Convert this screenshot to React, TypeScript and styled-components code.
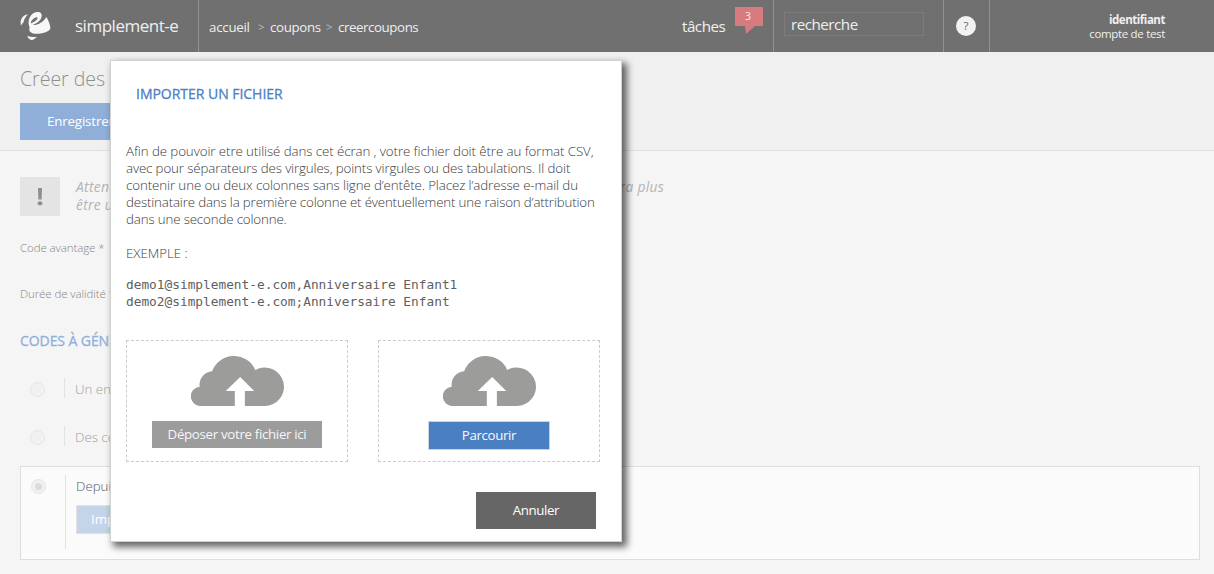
import React from "react";
import styled, { createGlobalStyle } from "styled-components";

const GlobalStyle = createGlobalStyle`
  * { box-sizing: border-box; }
  body {
    margin: 0;
    background: #f5f5f5;
    font-family: "Open Sans", "Liberation Sans", sans-serif;
    font-size: 13.3px;
    overflow: hidden;
  }
  p, h1, h2 { margin: 0; font-weight: 400; }
`;

const Page = styled.div`
  position: relative;
  height: 574px;
  overflow: hidden;
  white-space: nowrap;
`;

/* ---------- top bar ---------- */
const TopBar = styled.header`
  display: flex;
  height: 52px;
  background: #707070;
  color: #efefef;
`;

const Brand = styled.div`
  display: flex;
  width: 199px;
  padding: 12px 0 0 20px;
  gap: 24px;
  border-right: 1px solid #919191;
`;

const BrandName = styled.span`
  font-size: 17px;
  line-height: 26px;
  margin-top: 1px;
  letter-spacing: -0.48px;
`;

const Breadcrumb = styled.nav`
  display: flex;
  flex: 1;
  padding: 17px 0 0 10px;
  line-height: 20px;
`;

const Crumb = styled.span<{ $width: number; $spacing: number }>`
  width: ${(p) => p.$width}px;
  letter-spacing: ${(p) => p.$spacing}px;
`;

const Chevron = styled.span`
  width: 12px;
  font-size: 11.5px;
  color: #bdbdbd;
`;

const Tasks = styled.div`
  display: flex;
  width: 92px;
  gap: 9px;
  border-right: 1px solid #919191;
`;

const TasksLabel = styled.span`
  width: 44px;
  padding-top: 16px;
  font-size: 15.2px;
  line-height: 20px;
  letter-spacing: -0.5px;
`;

const TasksCount = styled.span`
  position: relative;
  width: 28px;
  height: 19px;
  margin-top: 7px;
  padding-right: 2px;
  background: #d77b7e;
  font-size: 10.5px;
  line-height: 18px;
  text-align: center;

  &::after {
    content: "";
    position: absolute;
    left: 10px;
    top: 19px;
    border-top: 8px solid #d77b7e;
    border-right: 9px solid transparent;
    border-left: 1px solid transparent;
  }
`;

const SearchCell = styled.div`
  width: 170px;
  padding: 12px 0 0 10px;
  border-right: 1px solid #919191;
`;

const SearchBox = styled.div`
  width: 140px;
  height: 24px;
  padding-left: 6px;
  border: 1px solid #7d7d7d;
  font-size: 15.2px;
  line-height: 23px;
  letter-spacing: -0.5px;
`;

const HelpCell = styled.div`
  display: flex;
  align-items: center;
  width: 46px;
  padding-left: 12px;
  border-right: 1px solid #919191;
`;

const HelpDot = styled.span`
  width: 20px;
  height: 20px;
  border-radius: 50%;
  background: #f2f2f2;
  color: #666;
  font-size: 11.5px;
  line-height: 20px;
  text-align: center;
`;

const Account = styled.div`
  width: 224px;
  padding: 13px 49px 0 0;
  font-size: 11.5px;
  line-height: 14px;
  text-align: right;
  letter-spacing: -0.32px;

  strong { display: block; letter-spacing: -0.46px; }
`;

/* ---------- page behind the dialog ---------- */
const TitleBand = styled.section`
  height: 99px;
  padding: 12px 20px 0;
  background: #f0f0f0;
  border-bottom: 1px solid #e0e0e0;
`;

const PageTitle = styled.h1`
  height: 39px;
  font-size: 19.5px;
  line-height: 30px;
  font-weight: 300;
  color: #8f8f8f;
`;

const SaveButton = styled.div`
  width: 130px;
  height: 37px;
  padding-left: 27px;
  background: #8fafd9;
  color: #fff;
  line-height: 36px;
  letter-spacing: -0.15px;
`;

const Notice = styled.div`
  display: flex;
  gap: 16px;
  padding: 26px 0 0 20px;
`;

const NoticeIcon = styled.div`
  display: flex;
  align-items: center;
  justify-content: center;
  width: 40px;
  height: 39px;
  background: #e4e4e4;
`;

const NoticeText = styled.div`
  width: 588px;
  font-size: 13.8px;
  font-style: italic;
  line-height: 18px;
  color: #b4b4b4;
  padding-top: 1px;
  letter-spacing: 0.3px;
`;

const NoticeLine = styled.p`
  display: flex;
  justify-content: space-between;
`;

const FieldLabel = styled.p`
  height: 46px;
  padding-left: 20px;
  font-size: 11.5px;
  line-height: 18px;
  font-weight: 300;
  color: #858585;
  letter-spacing: -0.09px;
`;

const Fields = styled.div`
  padding-top: 23px;
`;

const Heading = styled.h2`
  font-size: 14px;
  line-height: 19px;
  -webkit-text-stroke: 0.3px currentColor;
`;

const SectionTitle = styled(Heading)`
  height: 47px;
  padding-left: 20px;
  color: #8fafdb;
  letter-spacing: -0.08px;
`;

const Choice = styled.div`
  display: flex;
  height: 48px;
  padding-left: 30px;
  color: #a0a0a0;
  font-weight: 300;
`;

const Radio = styled.span`
  display: flex;
  align-items: center;
  justify-content: center;
  width: 15px;
  height: 15px;
  margin-top: 4px;
  border: 1px solid #e6e6e6;
  border-radius: 50%;
  background: #f1f1f1;
`;

const RadioMark = styled.span`
  width: 7px;
  height: 7px;
  border-radius: 50%;
  background: #dcdcdc;
`;

const ChoiceBody = styled.div<{ $height: number }>`
  height: ${(p) => p.$height}px;
  margin-left: 19px;
  padding-left: 10px;
  border-left: 1px solid #e2e2e2;
  line-height: 22px;
`;

const SelectedChoice = styled.div`
  display: flex;
  width: 1180px;
  height: 94px;
  margin: -8px 0 0 20px;
  padding: 8px 0 0 10px;
  background: #fbfbfb;
  border: 1px solid #dedede;
  font-weight: 300;
  color: #5a5a5a;
`;

const ImportButton = styled.div`
  width: 122px;
  height: 29px;
  margin-top: 8px;
  padding-left: 14px;
  border: 1px solid #e2e2e2;
  background: #c4d5e9;
  color: #fff;
  line-height: 26px;
  font-weight: 400;
`;

/* ---------- dialog ---------- */
const Dialog = styled.div`
  position: absolute;
  left: 110px;
  top: 60px;
  width: 512px;
  height: 482px;
  padding: 23px 15px 0;
  background: #fff;
  border: 1px solid #d2d2d2;
  box-shadow: 4px 4px 7px 1px rgba(0, 0, 0, 0.6);
`;

const DialogTitle = styled(Heading)`
  height: 59px;
  padding-left: 10px;
  color: #4a80c4;
  letter-spacing: -0.03px;
`;

const TextLine = styled.p<{ $spacing: number }>`
  line-height: 17px;
  font-weight: 300;
  color: #3a3a3a;
  letter-spacing: ${(p) => p.$spacing}px;
`;

const ExampleTitle = styled(TextLine)`
  margin-top: 17px;
`;

const Sample = styled.pre`
  margin: 14px 0 0;
  font-family: "DejaVu Sans Mono", monospace;
  font-size: 12.8px;
  line-height: 17px;
  color: #606060;
`;

const DropZones = styled.div`
  display: flex;
  gap: 30px;
  margin-top: 30px;
`;

const DropZone = styled.div`
  display: flex;
  flex-direction: column;
  align-items: center;
  gap: 15px;
  width: 222px;
  height: 122px;
  padding-top: 15px;
  border: 1px dashed #cbcbcb;
`;

const DropLabel = styled.div`
  width: 170px;
  height: 27px;
  background: #9c9c9c;
  color: #f6f6f6;
  line-height: 27px;
  text-align: center;
  letter-spacing: -0.32px;
`;

const BrowseButton = styled.div`
  width: 122px;
  height: 29px;
  border: 1px solid #ccd3dc;
  background: #4a80c2;
  color: #f8f8f8;
  line-height: 27px;
  text-align: center;
  letter-spacing: -0.35px;
`;

const CancelButton = styled.div`
  width: 120px;
  height: 37px;
  margin: 30px 0 0 350px;
  background: #666;
  color: #fff;
  line-height: 36px;
  text-align: center;
  letter-spacing: -0.4px;
`;

const CloudUpload = () => (
  <svg width="93" height="50" viewBox="0 0 278 150" preserveAspectRatio="none">
    <path
      fill="#9c9c9b"
      d="M31 150A29 29 0 0 1 26 92A40 40 0 0 1 63 46A69.3 69.3 0 0 1 192 42A57.7 57.7 0 1 1 220 150H161V105H189L147 63L104 105H131V150Z"
    />
  </svg>
);

const Logo = () => (
  <svg width="31" height="29" viewBox="60 36 93 87">
    <g fill="#f7f7f7">
      <path d="M63 77C59 62 66 46 84 43C75 52 72 60 70 68C67 69 65 72 63 77Z" />
      <path
        fillRule="evenodd"
        d="M86 73C84 56 94 38 110 36C120 35 126 40 125 48C124 61 112 69 98 75C112 76 128 69 139 51C145 60 151 74 151 86C144 96 129 101 108 101C95 101 87 95 88 87C90 82 87 78 86 73ZM92 70C100 68 112 61 113 54C112 48 94 57 92 70Z"
      />
      <path d="M82 107C91 111 100 112 111 110C105 115 101 120 95 120C88 119 84 114 82 107Z" />
    </g>
  </svg>
);

const AlertMark = () => (
  <svg width="6" height="18" viewBox="0 0 6 18">
    <path fill="#8d8d8d" d="M1 0H5L4.6 11.5H1.4Z" />
    <ellipse cx="3" cy="15.3" rx="2.4" ry="2.1" fill="#8d8d8d" />
  </svg>
);

const paragraph: [string, number][] = [
  ["Afin de pouvoir etre utilisé dans cet écran , votre fichier doit être au format CSV,", -0.08],
  ["avec pour séparateurs des virgules, points virgules ou des tabulations. Il doit", -0.125],
  ["contenir une ou deux colonnes sans ligne d’entête. Placez l’adresse e-mail du", -0.092],
  ["destinataire dans la première colonne et éventuellement une raison d’attribution", -0.157],
  ["dans une seconde colonne.", -0.14],
];

export default function App() {
  return (
    <Page>
      <GlobalStyle />
      <TopBar>
        <Brand>
          <Logo />
          <BrandName>simplement-e</BrandName>
        </Brand>
        <Breadcrumb>
          <Crumb $width={49} $spacing={-0.25}>accueil</Crumb>
          <Chevron>&gt;</Chevron>
          <Crumb $width={56} $spacing={-0.33}>coupons</Crumb>
          <Chevron>&gt;</Chevron>
          <Crumb $width={82} $spacing={-0.42}>creercoupons</Crumb>
        </Breadcrumb>
        <Tasks>
          <TasksLabel>tâches</TasksLabel>
          <TasksCount>3</TasksCount>
        </Tasks>
        <SearchCell>
          <SearchBox>recherche</SearchBox>
        </SearchCell>
        <HelpCell>
          <HelpDot>?</HelpDot>
        </HelpCell>
        <Account>
          <strong>identifiant</strong>
          compte de test
        </Account>
      </TopBar>

      <TitleBand>
        <PageTitle>Créer des</PageTitle>
        <SaveButton>Enregistrer</SaveButton>
      </TitleBand>

      <Notice>
        <NoticeIcon>
          <AlertMark />
        </NoticeIcon>
        <NoticeText>
          <NoticeLine>
            <span>Attention</span>
            <span>pourra plus</span>
          </NoticeLine>
          <NoticeLine>être utilisé</NoticeLine>
        </NoticeText>
      </Notice>

      <Fields>
        <FieldLabel>Code avantage *</FieldLabel>
        <FieldLabel>Durée de validité *</FieldLabel>
      </Fields>

      <SectionTitle>CODES À GÉNÉRER</SectionTitle>
      <Choice>
        <Radio />
        <ChoiceBody $height={20}>Un ensemble</ChoiceBody>
      </Choice>
      <Choice>
        <Radio />
        <ChoiceBody $height={20}>Des codes</ChoiceBody>
      </Choice>
      <SelectedChoice>
        <Radio>
          <RadioMark />
        </Radio>
        <ChoiceBody $height={74}>
          Depuis un fichier
          <ImportButton>Importer</ImportButton>
        </ChoiceBody>
      </SelectedChoice>

      <Dialog>
        <DialogTitle>IMPORTER UN FICHIER</DialogTitle>
        {paragraph.map(([text, spacing]) => (
          <TextLine key={text} $spacing={spacing}>{text}</TextLine>
        ))}
        <ExampleTitle $spacing={-0.02}>EXEMPLE :</ExampleTitle>
        <Sample>{"demo1@simplement-e.com,Anniversaire Enfant1\ndemo2@simplement-e.com;Anniversaire Enfant"}</Sample>
        <DropZones>
          <DropZone>
            <CloudUpload />
            <DropLabel>Déposer votre fichier ici</DropLabel>
          </DropZone>
          <DropZone>
            <CloudUpload />
            <BrowseButton>Parcourir</BrowseButton>
          </DropZone>
        </DropZones>
        <CancelButton>Annuler</CancelButton>
      </Dialog>
    </Page>
  );
}
